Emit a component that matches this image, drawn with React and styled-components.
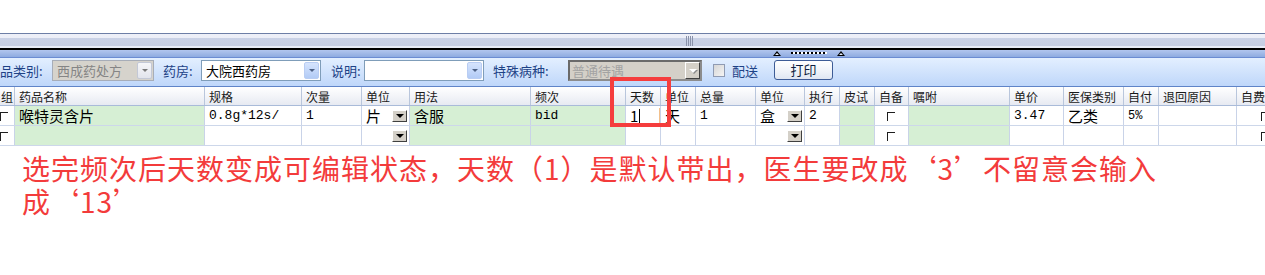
import React from 'react'
import styled, { createGlobalStyle, css } from 'styled-components'

const COLS =
  '15px 190px 97px 60px 48px 121px 95px 35px 35px 60px 49px 35px 35px 34px 101px 54px 60px 35px 78px 58px'

const GREEN = [1, 5, 6, 12, 14]

const HEAD = [
  '组', '药品名称', '规格', '次量', '单位', '用法', '频次', '天数', '单位', '总量',
  '单位', '执行', '皮试', '自备', '嘱咐', '单价', '医保类别', '自付', '退回原因', '自费',
]

const ROWS = [
  [
    { check: 'left' },
    { text: '喉特灵含片' },
    { text: '0.8g*12s/', mono: true },
    { text: '1', mono: true },
    { text: '片', drop: true },
    { text: '含服' },
    { text: 'bid', mono: true },
    { edit: '1' },
    { text: '天' },
    { text: '1', mono: true },
    { text: '盒', drop: true },
    { text: '2', mono: true },
    {},
    { check: 'center' },
    {},
    { text: '3.47', mono: true },
    { text: '乙类' },
    { text: '5%', mono: true, small: true },
    {},
    { check: 'center' },
  ],
  [
    { check: 'left' },
    {}, {}, {},
    { drop: true },
    {}, {}, {}, {}, {},
    { drop: true },
    {}, {},
    { check: 'center' },
    {}, {}, {}, {}, {},
    { check: 'center' },
  ],
]

export default function App() {
  return (
    <Page>
      <GlobalStyle />
      <TopSpace />
      <Splitter>
        <Grip />
      </Splitter>
      <BlueBand>
        <Triangle />
        <Dots />
        <Triangle />
      </BlueBand>

      <Toolbar>
        <Label $w={52}>品类别:</Label>
        <ComboBox $w={102} $variant="xpDisabled">
          <ComboText>西成药处方</ComboText>
          <ComboButton $variant="xpDisabled" />
        </ComboBox>
        <Label $w={38} $ml={9}>药房:</Label>
        <ComboBox $w={120}>
          <ComboText>大院西药房</ComboText>
          <ComboButton />
        </ComboBox>
        <Label $w={33} $ml={10}>说明:</Label>
        <ComboBox $w={120}>
          <ComboText />
          <ComboButton />
        </ComboBox>
        <Label $w={75} $ml={9}>特殊病种:</Label>
        <ComboBox $w={134} $variant="classic">
          <ComboText>普通待遇</ComboText>
          <ComboButton $variant="classic" />
        </ComboBox>
        <CheckBox />
        <Label $ml={7} $w={26}>配送</Label>
        <PrintButton>打印</PrintButton>
      </Toolbar>

      <Grid>
        <GridRow $head>
          {HEAD.map((h, i) => (
            <HeadCell key={i}>{h}</HeadCell>
          ))}
        </GridRow>
        {ROWS.map((row, r) => (
          <GridRow key={r}>
            {row.map((c, i) => (
              <Cell
                key={i}
                $green={GREEN.includes(i)}
                $mono={c.mono}
                $small={c.small}
                $align={c.check}
                $pad={i === 0 ? 0 : 4}
              >
                {c.check && <Tick />}
                {c.text && <span>{c.text}</span>}
                {c.edit && (
                  <EditBox>
                    {c.edit}
                    <Caret />
                  </EditBox>
                )}
                {c.drop && <CellDrop />}
              </Cell>
            ))}
          </GridRow>
        ))}
      </Grid>

      <Note>
        <NoteLine>
          选完频次后天数变成可编辑状态，天数（1）是默认带出，医生要改成‘3’不留意会输入
        </NoteLine>
        <NoteLine>成‘13’</NoteLine>
      </Note>

      <Highlight />
    </Page>
  )
}

const GlobalStyle = createGlobalStyle`
  html, body {
    margin: 0;
    padding: 0;
    background: #fff;
  }
  body {
    font-family: "Noto Sans CJK SC", sans-serif;
    overflow: hidden;
  }
`

const Page = styled.div`
  position: relative;
  width: 1265px;
  height: 275px;
  overflow: hidden;
  background: #fff;
`

const TopSpace = styled.div`
  height: 33px;
`

const Splitter = styled.div`
  height: 14px;
  border-top: 1px solid #6d7ea6;
  border-bottom: 2px solid #000;
  background: linear-gradient(
    #eef0f8 0,
    #eceef7 4px,
    #cad2e6 4px,
    #c6cee3 12px,
    #e8ecf7 12px
  );
  padding-left: 686px;
  display: flex;
  align-items: center;
`

const Grip = styled.div`
  width: 8px;
  height: 10px;
  background: repeating-linear-gradient(
    90deg,
    #8a92aa 0 1px,
    transparent 1px 2px
  );
`

const BlueBand = styled.div`
  height: 7px;
  border-bottom: 1px solid #6b8cd2;
  background: linear-gradient(#b2c6ee, #8eabe0);
  padding-left: 773px;
  display: flex;
  align-items: center;
  gap: 6px;
`

const Triangle = styled.span`
  position: relative;
  width: 0;
  height: 0;
  border-left: 4px solid transparent;
  border-right: 4px solid transparent;
  border-bottom: 5px solid #000;

  &::after {
    content: '';
    position: absolute;
    left: -2px;
    top: 2px;
    border-left: 2px solid transparent;
    border-right: 2px solid transparent;
    border-bottom: 2px solid #e4ecfa;
  }
`

const Dots = styled.span`
  width: 36px;
  height: 2px;
  margin: 0 4px 2px;
  background: repeating-linear-gradient(90deg, #000 0 2px, #fff 2px 4px);
`

const Toolbar = styled.div`
  height: 28px;
  box-sizing: border-box;
  padding-top: 2px;
  display: flex;
  align-items: flex-start;
  background: linear-gradient(#e3efff, #bfd7fa);
  font-size: 13px;
`

const Label = styled.span`
  width: ${p => p.$w || 'auto'}px;
  margin-left: ${p => p.$ml || 0}px;
  height: 21px;
  line-height: 21px;
  color: #1e4286;
  white-space: nowrap;
  font-size: 13px;
`

const ComboBox = styled.div`
  box-sizing: border-box;
  width: ${p => p.$w}px;
  height: 21px;
  display: flex;
  align-items: center;
  padding: 0 1px 0 4px;
  font-size: 13px;
  ${p =>
    p.$variant === 'xpDisabled'
      ? css`
          border: 1px solid #a7adb8;
          background: #d6d3cc;
          color: #858585;
        `
      : p.$variant === 'classic'
        ? css`
            border: 2px solid #6a6a6a;
            border-right-color: #8c8c8c;
            border-bottom-color: #8c8c8c;
            background: #d4d0c8;
            color: #a3a3a3;
            padding-left: 2px;
            padding-right: 0;
          `
        : css`
            border: 1px solid #7f9db9;
            background: #fff;
            color: #000;
          `}
`

const ComboText = styled.span`
  flex: 1;
  white-space: nowrap;
  overflow: hidden;
`

const ComboButton = styled.span`
  width: 15px;
  height: 17px;
  box-sizing: border-box;
  display: flex;
  align-items: center;
  justify-content: center;

  &::after {
    content: '';
    border-left: 3px solid transparent;
    border-right: 3px solid transparent;
    border-top: 3px solid #4d6185;
  }

  ${p =>
    p.$variant === 'xpDisabled'
      ? css`
          border: 1px solid #c3c8d6;
          border-radius: 2px;
          background: linear-gradient(#f6f6f8, #e2e4ec);
          &::after {
            border-top-color: #7a7a7a;
          }
        `
      : p.$variant === 'classic'
        ? css`
            border: 1px solid;
            border-color: #fff #404040 #404040 #fff;
            background: #d4d0c8;
            &::after {
              border-left-width: 4px;
              border-right-width: 4px;
              border-top: 4px solid #fff;
              filter: drop-shadow(1px 1px 0 #8a8a8a);
            }
          `
        : css`
            border: 1px solid #b9cdf3;
            border-radius: 2px;
            background: linear-gradient(#d6e4fd, #b2cbf6);
          `}
`

const CheckBox = styled.span`
  width: 12px;
  height: 13px;
  box-sizing: border-box;
  margin: 4px 0 0 11px;
  border: 1px solid #8f9bb3;
  background: linear-gradient(135deg, #d6d6d6, #f4f4f4);
`

const PrintButton = styled.button`
  box-sizing: border-box;
  width: 59px;
  height: 20px;
  margin-left: 16px;
  padding: 0;
  border: 1px solid #3d5c96;
  border-radius: 3px;
  background: linear-gradient(#ffffff, #eef2f8 60%, #dfe6f2);
  font-family: "Noto Sans CJK SC", sans-serif;
  font-size: 13px;
  line-height: 18px;
  color: #0e1e40;
`

const Grid = styled.div`
  width: 1265px;
  overflow: hidden;
`

const GridRow = styled.div`
  display: grid;
  grid-template-columns: ${COLS};
  height: 20px;
  box-sizing: border-box;
  border-bottom: 1px solid #cdd7ea;

  ${p =>
    p.$head &&
    css`
      height: 20px;
      border-top: 1px solid #5f84c8;
      border-bottom-color: #a9bbd9;
      background: linear-gradient(#ffffff, #e7eaf2);
    `}
`

const HeadCell = styled.div`
  box-sizing: border-box;
  display: flex;
  align-items: center;
  padding-left: 4px;
  border-right: 1px solid #b9c6dc;
  overflow: hidden;
  white-space: nowrap;
  font-size: 12px;
  color: #1a1a1a;

  &:first-child {
    padding-left: 1px;
  }
`

const Cell = styled.div`
  box-sizing: border-box;
  display: flex;
  align-items: center;
  justify-content: ${p =>
    p.$align === 'center' ? 'center' : 'space-between'};
  padding-left: ${p => (p.$align === 'center' ? 0 : p.$pad)}px;
  padding-right: 2px;
  border-right: 1px solid #c9d3e8;
  background: ${p => (p.$green ? '#d6efd4' : '#fff')};
  overflow: hidden;
  white-space: nowrap;
  color: #000;
  font-family: ${p =>
    p.$mono
      ? '"Liberation Mono", "Noto Sans CJK SC", monospace'
      : '"Noto Sans CJK SC", sans-serif'};
  font-size: ${p => (p.$mono ? (p.$small ? 12 : 13) : 15)}px;
`

const Tick = styled.span`
  width: 8px;
  height: 9px;
  box-sizing: border-box;
  border-top: 1px solid #1e1e1e;
  border-left: 1px solid #1e1e1e;
  margin-top: 2px;
`

const EditBox = styled.span`
  flex: 1;
  align-self: stretch;
  display: flex;
  align-items: center;
  margin: 2px -2px 2px 0;
  border-right: 1px solid #f2c08c;
`

const Caret = styled.span`
  width: 1px;
  height: 14px;
  margin-left: 1px;
  background: #000;
`

const CellDrop = styled.span`
  width: 15px;
  height: 12px;
  box-sizing: border-box;
  margin-left: auto;
  border: 1px solid;
  border-color: #fff #404040 #404040 #fff;
  background: #d4d0c8;
  display: flex;
  align-items: center;
  justify-content: center;

  &::after {
    content: '';
    border-left: 4px solid transparent;
    border-right: 4px solid transparent;
    border-top: 4px solid #000;
  }
`

const Note = styled.div`
  margin-top: 6px;
  padding-left: 22px;
  display: flex;
  flex-direction: column;
  font-family: "Noto Sans CJK SC", sans-serif;
  font-size: 28px;
  letter-spacing: 1px;
  color: #f33b3b;
`

const NoteLine = styled.div`
  height: 33px;
  line-height: 33px;
  white-space: nowrap;
`

const Highlight = styled.div`
  position: absolute;
  left: 610px;
  top: 77px;
  width: 61px;
  height: 50px;
  box-sizing: border-box;
  border: 4px solid #f53d3d;
  pointer-events: none;
`
